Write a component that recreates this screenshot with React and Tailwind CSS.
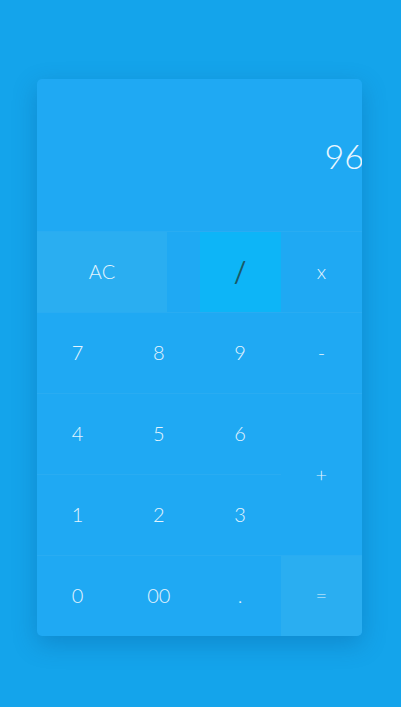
import React from "react";

const Btn = ({ children, className = "" }) => (
  <div className={`flex items-center justify-center border-t border-[#29acf2] pb-[2px] text-[20px] font-light text-[#e3f4fe] ${className}`}>
    {children}
  </div>
);

export default function App() {
  return (
    <div className="min-h-[707px] w-full bg-[#14a4eb] pt-[79px]" style={{ fontFamily: "Lato, 'Open Sans', sans-serif" }}>
      <div className="ml-[37px] w-[325px] overflow-hidden rounded-[5px] bg-[#1fa9f3] shadow-[0_8px_24px_rgba(0,60,120,0.25)]">
        <div className="flex h-[152px] items-center justify-end">
          <span className="mr-[-2px] text-[34px] font-light text-[#eaf7ff]">96</span>
        </div>
        <div className="grid grid-cols-4 grid-rows-[81px_81px_81px_81px_81px]">
          <div className="col-span-2 border-t border-[#29acf2]">
            <div className="flex h-full w-4/5 items-center justify-center bg-[#2aaef1] pb-[2px] text-[20px] font-light text-[#e3f4fe]">AC</div>
          </div>
          <Btn className="bg-[#0db5f7] !text-[#1a5a66] !text-[28px] !font-normal">/</Btn>
          <Btn>x</Btn>
          <Btn>7</Btn>
          <Btn>8</Btn>
          <Btn>9</Btn>
          <Btn>-</Btn>
          <Btn>4</Btn>
          <Btn>5</Btn>
          <Btn>6</Btn>
          <Btn className="row-span-2">+</Btn>
          <Btn>1</Btn>
          <Btn>2</Btn>
          <Btn>3</Btn>
          <Btn>0</Btn>
          <Btn>00</Btn>
          <Btn>.</Btn>
          <Btn className="bg-[#2aaef1]">=</Btn>
        </div>
      </div>
    </div>
  );
}
